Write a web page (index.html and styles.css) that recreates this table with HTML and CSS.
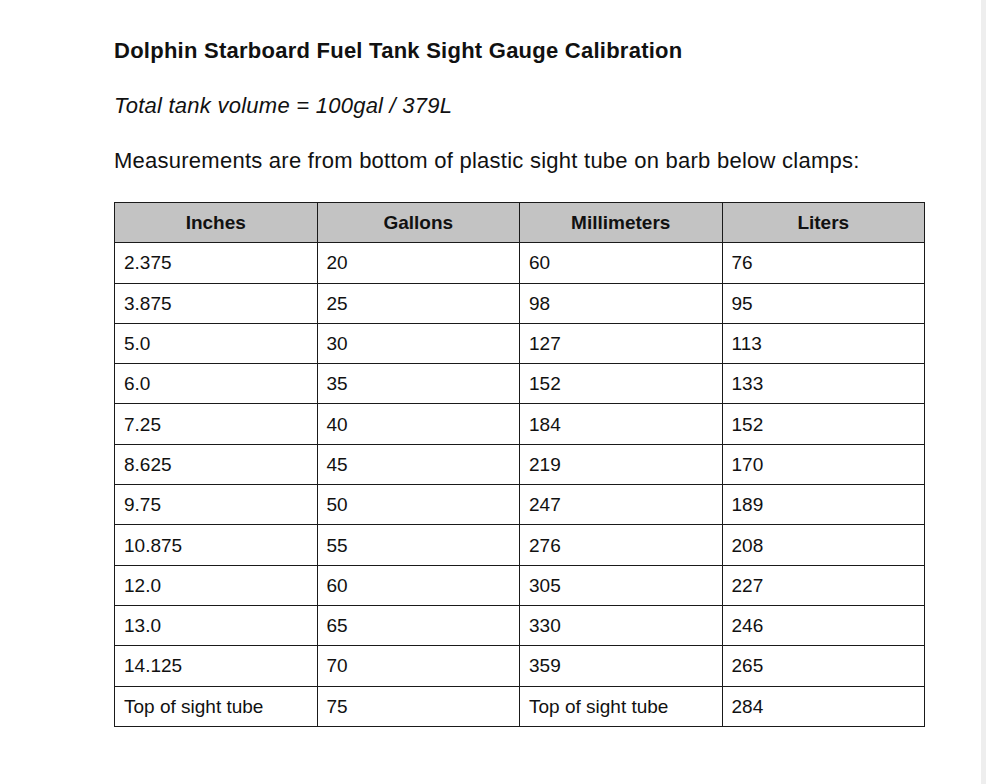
FILE: index.html
```html
<!DOCTYPE html>
<html>
<head>
<meta charset="utf-8">
<link rel="stylesheet" href="styles.css">
</head>
<body>
<div class="page">
  <div class="doc">
    <h1 class="title">Dolphin Starboard Fuel Tank Sight Gauge Calibration</h1>
    <p class="total">Total tank volume = 100gal / 379L</p>
    <p class="note">Measurements are from bottom of plastic sight tube on barb below clamps:</p>
    <table class="calib">
      <thead>
        <tr><th>Inches</th><th>Gallons</th><th>Millimeters</th><th>Liters</th></tr>
      </thead>
      <tbody>
        <tr><td>2.375</td><td>20</td><td>60</td><td>76</td></tr>
        <tr><td>3.875</td><td>25</td><td>98</td><td>95</td></tr>
        <tr><td>5.0</td><td>30</td><td>127</td><td>113</td></tr>
        <tr><td>6.0</td><td>35</td><td>152</td><td>133</td></tr>
        <tr><td>7.25</td><td>40</td><td>184</td><td>152</td></tr>
        <tr><td>8.625</td><td>45</td><td>219</td><td>170</td></tr>
        <tr><td>9.75</td><td>50</td><td>247</td><td>189</td></tr>
        <tr><td>10.875</td><td>55</td><td>276</td><td>208</td></tr>
        <tr><td>12.0</td><td>60</td><td>305</td><td>227</td></tr>
        <tr><td>13.0</td><td>65</td><td>330</td><td>246</td></tr>
        <tr><td>14.125</td><td>70</td><td>359</td><td>265</td></tr>
        <tr><td>Top of sight tube</td><td>75</td><td>Top of sight tube</td><td>284</td></tr>
      </tbody>
    </table>
  </div>
  <div class="edge"></div>
</div>
</body>
</html>
```
FILE: styles.css
```css
html, body {
  margin: 0;
  padding: 0;
  background: #ffffff;
}
body {
  font-family: "Liberation Sans", Arial, sans-serif;
  color: #111111;
}
.page {
  display: flex;
  min-height: 784px;
}
.doc {
  flex: 1;
  padding: 38px 0 0 114px;
}
.edge {
  width: 5px;
  background: #eeeeee;
}
.title {
  margin: 0;
  font-size: 22px;
  font-weight: bold;
  letter-spacing: 0.25px;
  line-height: 26px;
}
.total {
  margin: 29px 0 0 0;
  font-size: 22px;
  font-style: italic;
  letter-spacing: 0.25px;
  line-height: 26px;
}
.note {
  margin: 29px 0 0 0;
  font-size: 22px;
  letter-spacing: 0.25px;
  line-height: 26px;
}
.calib {
  margin-top: 28px;
  border-collapse: collapse;
  width: 811px;
  table-layout: fixed;
}
.calib th,
.calib td {
  border: 1.5px solid #1a1a1a;
  height: 38.3px;
  padding: 1px 9px 0 9px;
  font-size: 19px;
  text-align: left;
  vertical-align: middle;
}
.calib th {
  background: #c3c3c3;
  text-align: center;
  font-weight: bold;
}
```
